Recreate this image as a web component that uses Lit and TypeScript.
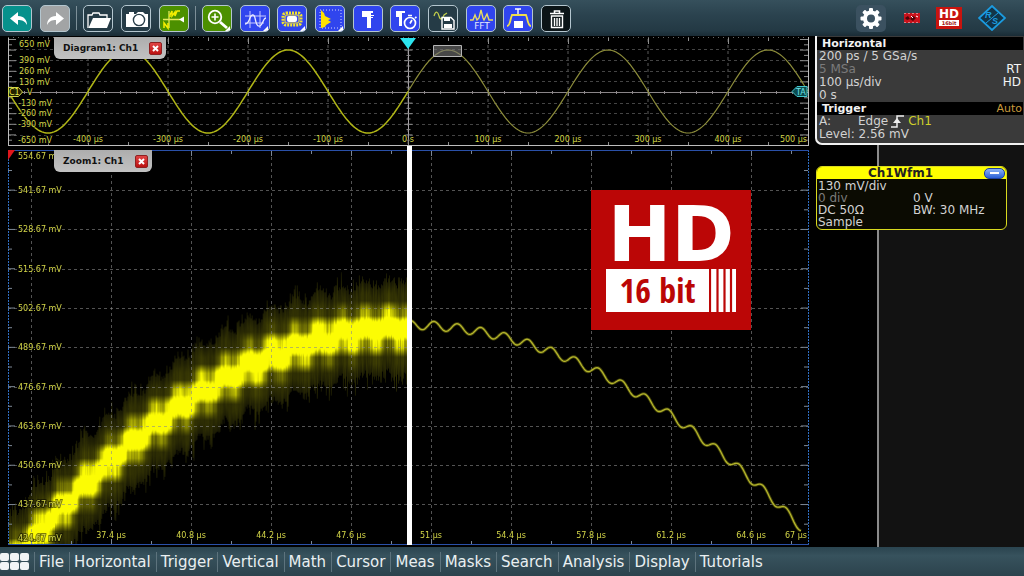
import { LitElement, html, svg, css } from "lit";
import { customElement, property } from "lit/decorators.js";

const range = (n: number, from = 0) => Array.from({ length: n }, (_, i) => i + from);

/* ---------- toolbar glyphs, drawn in a 30 x 27 box ---------- */
const corner = svg`<path d="M27 20v5h-5z" fill="#fff"/>`;
const glyphs: Record<string, unknown> = {
  undo: svg`<path d="M7 12.500 15 6v4c6 0 9 4 9 9-2-4-5-5-9-5v5z" fill="#fff"/>`,
  redo: svg`<path d="M23 12.500 15 6v4c-6 0-9 4-9 9 2-4 5-5 9-5v5z" fill="#fff"/>`,
  open: svg`<path d="M4 22V9h4l1-2h6l1 2h7v3" fill="none" stroke="#fff" stroke-width="1.300"/><path d="M9 12h18l-4 10H4.500z" fill="#fff"/>`,
  camera: svg`<path d="M4 8h3V6h5v2h2l2-2h5l2 2h3v13H4z" fill="#fff"/><circle cx="17" cy="14" r="5.600" fill="#fff" stroke="#2a3f4a" stroke-width="1.400"/>`,
  autoset: svg`<path d="M9 5v17M3 13.500h17" stroke="#e4ea5a" stroke-width="1.300"/><path d="M10 11V9l2-4v5l3-4v4l2-5h3" fill="none" stroke="#f4ee00" stroke-width="1.500"/><path d="M4 22v-5l4 5v-5" fill="none" stroke="#f4ee00" stroke-width="1.500"/><path d="m19 13.500 5-3v6z" fill="#fff"/>`,
  zoom: svg`<circle cx="12" cy="11" r="6.300" fill="none" stroke="#fff" stroke-width="1.800"/><path d="M8.500 11h7M12 7.500v7" stroke="#fff" stroke-width="1.600"/><path d="m17 16 7 6" stroke="#fff" stroke-width="2.800"/>${corner}`,
  cursor: svg`<path d="M9 5v17M19 5v17M4 10h21M4 17h19" stroke="#c9ccff" stroke-width="1"/><path d="M4 18c3 0 4-3 5-6s4-5 5 0 2 9 5 8 3-8 6-8" fill="none" stroke="#e9e9ff" stroke-width="1.300"/>${corner}`,
  mask: svg`<rect x="5" y="7" width="18" height="12" rx="3" fill="none" stroke="#f4e430" stroke-width="3" stroke-dasharray="2 1"/><rect x="7" y="9" width="14" height="8" rx="2" fill="#3c4bf0" stroke="#f4e430"/><rect x="9" y="10" width="10" height="6" rx="2" fill="#fff"/>${corner}`,
  histogram: svg`<path d="M4 4h21v18H4z" fill="none" stroke="#d5d8ff" stroke-dasharray="1 2"/><path d="M5 4 8 7l1 3 6 3-3 1 3 2-5 3-1 2-4 1z" fill="#ffe100"/>${corner}`,
  measure: svg`<path d="M8 5h11v2h-2v15h-4V11H8z" fill="#fff"/><path d="M17 9.500h3M17 11.500h2" stroke="#fff"/>`,
  quick: svg`<path d="M5 5h9v2h-3v13H8V11H5z" fill="#fff"/><circle cx="19" cy="17" r="5.500" fill="#3348ee" stroke="#fff" stroke-width="1.700"/><path d="M19 17.500 21 14M17 9.500h4M24 12l1.500-1" stroke="#fff" stroke-width="1.700"/>`,
  save: svg`<path d="M5 10c2-6 4-4 5 0s3 4 5-1l3-2" fill="none" stroke="#c3cf4a" stroke-width="1.200"/><path d="M13 11.500h9l3 3V23H13z" fill="none" stroke="#fff" stroke-width="1.400"/><path d="M15 12h6v3h-6zM15 18h8v4h-8z" fill="#fff"/>`,
  fft: svg`<path d="M3 14h3l2-5 2 5 2-2 2-8 2 8 1 2 3-6 2 6h4" fill="none" stroke="#e7dc63" stroke-width="1.400"/><text x="15" y="23" text-anchor="middle" class="tiny">FFT</text>`,
  gate: svg`<path d="M3 20c2 0 3-3 4-8l1-3h14l1 3c1 5 2 8 4 8" fill="none" stroke="#f0df4a" stroke-width="1.800"/><path d="M11 3h6M14 3v5" stroke="#fff" stroke-width="1.400"/><path d="M10 15h9v7h-9z" fill="#fff"/>`,
  trash: svg`<path d="M8 7.500h14M12.500 7V5h5v2" fill="none" stroke="#fff" stroke-width="1.600"/><path d="M9.500 10h11v11.500h-11zM12.500 12v8M15 12v8M17.500 12v8" fill="none" stroke="#fff" stroke-width="1.400"/>`,
};

type Tool = [id: string, label: string, tone: string];
const groups: Tool[][] = [
  [["undo", "Undo", "teal"], ["redo", "Redo", "gray"]],
  [["open", "Open", "dark"], ["camera", "Screenshot", "dark"], ["autoset", "Autoset", "green"]],
  [
    ["zoom", "Zoom", "green"], ["cursor", "Cursor", "blue"], ["mask", "Mask test", "blue"],
    ["histogram", "Histogram", "blue"], ["measure", "Measurement", "blue"], ["quick", "Quick measurement", "blue"],
    ["save", "Save waveform", "dark"], ["fft", "FFT", "blue"], ["gate", "Gate", "blue"], ["trash", "Delete", "black"],
  ],
];
const menus = ["File", "Horizontal", "Trigger", "Vertical", "Math", "Cursor", "Meas", "Masks", "Search", "Analysis", "Display", "Tutorials"];

@customElement("scope-toolbar")
export class ScopeToolbar extends LitElement {
  static styles = css`
    :host {
      display: flex; align-items: center; box-sizing: border-box; height: 36px; padding: 0 18px 0 2px;
      background: linear-gradient(#36505c 0, #2b434f 40%, #233944 85%, #1a2c36 100%);
    }
    .group { display: flex; gap: 8px; }
    .wide { width: 369px; gap: 0; justify-content: space-between; }
    .rule { width: 1px; height: 24px; margin: 0 6px; background: #7d8f98; }
    .tool {
      width: 30px; height: 27px; padding: 0; box-sizing: border-box; overflow: hidden;
      border: 1px solid #b4c6cf; border-radius: 5px; display: grid; place-items: center;
    }
    .tool svg { width: 30px; height: 27px; display: block; }
    .teal { background: #07918c; }
    .gray { background: #a2a4a5; }
    .dark { background: #253b46; }
    .green { background: #4c9000; }
    .blue { background: #3045ee; }
    .black { background: #0b1417; }
    .tiny { font: 9px "DejaVu Sans", sans-serif; fill: #e8eaff; }
    .space { flex: 1; }
    .status { display: flex; align-items: center; }
    .gear { border: 0; background: #3b5160; }
    .flag { width: 16px; height: 10px; margin: 0 16px 0 18px; }
    .badge {
      width: 26px; height: 22px; box-sizing: border-box; background: #c8140f; color: #fff;
      display: grid; grid-template-rows: 12px 6px; justify-content: center; padding-top: 1px;
      font: bold 12px/12px "DejaVu Sans", sans-serif; text-align: center;
    }
    .badge small { display: block; background: #fff; color: #a31310; font: bold 5px/6px "DejaVu Sans", sans-serif; }
    .brand { width: 28px; height: 26px; margin-left: 16px; }
    .brandText { font: italic bold 9px "Liberation Sans", sans-serif; fill: #1b9be0; }
  `;
  render() {
    return html`
      ${groups.map((g, i) => html`
        ${i ? html`<span class="rule"></span>` : ""}
        <div class="group ${i === 2 ? "wide" : ""}">
          ${g.map(([id, label, tone]) => html`<button class="tool ${tone}" aria-label=${label}>
            <svg viewBox="0 0 30 27" aria-hidden="true">${glyphs[id]}</svg></button>`)}
        </div>`)}
      <span class="space"></span>
      <div class="status">
        <button class="tool gear" aria-label="Settings">
          <svg viewBox="0 0 30 27" aria-hidden="true">
            ${range(8).map((i) => svg`<rect x="13" y="3" width="4" height="6" rx="1" fill="#fff" transform="rotate(${i * 45} 15 13.500)"/>`)}
            <circle cx="15" cy="13.500" r="6" fill="none" stroke="#fff" stroke-width="4"/>
          </svg>
        </button>
        <svg class="flag" viewBox="0 0 16 10" aria-hidden="true">
          <path d="M0 0h16v10H0z" fill="#c8121c"/><path d="m1 5 3-2 2 3 3-3 3 2-3 3-3-2-3 1z" fill="#4d0508"/>
          <path d="M0 .5h16M0 9.500h16" stroke="#e6c5c5" stroke-opacity=".6" stroke-dasharray="2 2"/><path d="m7 3 2 2M12 3l2 1" stroke="#fff" fill="none"/>
        </svg>
        <div class="badge">HD<small>16bit</small></div>
        <svg class="brand" viewBox="0 0 28 26" aria-hidden="true">
          <path d="M14 1 27 13 14 25 1 13z" fill="#123448" stroke="#1b9be0" stroke-width="1.800"/>
          <text x="7" y="13" class="brandText">R</text><text x="14" y="19" class="brandText">S</text>
          <path d="M8 18 20 8" stroke="#1b9be0"/>
        </svg>
      </div>`;
  }
}

@customElement("scope-tab")
export class ScopeTab extends LitElement {
  @property() label = "";
  static styles = css`
    :host {
      display: flex; align-items: center; gap: 11px; height: 22px; padding: 0 4px 0 9px;
      background: linear-gradient(#adadad, #c2c2c2); border-radius: 0 0 6px 6px;
      font: bold 9px/22px "DejaVu Sans", sans-serif; color: #111; white-space: nowrap;
    }
    .close { width: 13px; height: 13px; padding: 0; border: 1px solid #8e2020; border-radius: 2px; background: linear-gradient(#e04444, #bb1111); }
    .close svg { display: block; width: 11px; height: 11px; }
  `;
  render() {
    return html`<span>${this.label}</span>
      <button class="close" aria-label="Close ${this.label}">
        <svg viewBox="0 0 11 11" aria-hidden="true"><path d="m3 3 5 5M8 3 3 8" stroke="#fff" stroke-width="2"/></svg>
      </button>`;
  }
}

const plotText = css`
  .plot { display: block; width: 100%; height: 100%; }
  .axis { font: 8px "DejaVu Sans", sans-serif; fill: #d3d548; stroke: #000; stroke-opacity: 0.500; stroke-width: 2px; paint-order: stroke; }
  .tab { position: absolute; top: 0; left: 46px; }
`;

@customElement("scope-overview")
export class ScopeOverview extends LitElement {
  static styles = [plotText, css`
    :host { display: block; position: relative; min-height: 0; background: #000; }
    .mark { font: 8px "DejaVu Sans", sans-serif; }
  `];
  render() {
    const sine = (a: number, b: number) =>
      "M" + range((b - a) / 2 + 1).map((i) => {
        const x = a + i * 2;
        return `${x} ${(54.5 - 41.5 * Math.sin(((x - 400) / 160) * 2 * Math.PI)).toFixed(1)}`;
      }).join("L");
    const rows: [string, number][] = [["650 mV", 7], ["390 mV", 23], ["260 mV", 34], ["130 mV", 45], ["-130 mV", 66], ["-260 mV", 76], ["-390 mV", 87], ["-650 mV", 103]];
    return html`
      <svg class="plot" viewBox="0 0 801 109" preserveAspectRatio="none" role="img" aria-label="Overview waveform">
        ${range(9, 1).map((i) => svg`<path d="M${i * 80} 2V108" stroke="#5a5a5a" stroke-dasharray="3 3"/>`)}
        ${range(9, -4).map((i) => svg`<path d="M0 ${Math.round(55 + i * 10.65) + 0.5}H800" stroke="#444" stroke-dasharray="3 3"/>`)}
        <path d="M0 55.500H800" stroke="#8a8588"/><path d="M400.500 2V108" stroke="#a5a0a5"/>
        ${range(51).map((i) => svg`<path d="M${i * 16 + 0.5} ${i % 5 ? 54 : 52}v${i % 5 ? 3 : 7}" stroke="#8e898c"/>`)}
        ${range(21).map((i) => svg`<path d="M${i * 40 + 0.5} 1v${i % 2 ? 3 : 6}M${i * 40 + 0.5} 108v-${i % 2 ? 3 : 6}" stroke="#8e8e8e"/>`)}
        ${range(20, -10).map((i) => {
          const y = 55.5 + i * 5.3;
          const w = i % 2 ? 4 : 8;
          return svg`<path d="M0 ${y}h${w}M800 ${y}h-${w}M${400.5 - w / 2} ${y}h${w}" stroke="#8e8e8e"/>`;
        })}
        <path d="M.5 0V109M0 108.500H801M800.500 0V109" stroke="#bdbdbd"/>
        <path d="M0 .5H800" stroke="#6a6a6a" stroke-dasharray="1 4"/>
        <path d=${sine(0, 400)} fill="none" stroke="#b0b516" stroke-width="1.500"/>
        <path d=${sine(400, 800)} fill="none" stroke="#8c8c3a" stroke-width="1.200"/>
        <path d="M425.500 8.500h28v11h-28z" fill="#77777799" stroke="#b5b5b5"/>
        <path d="M392 1h16l-8 11z" fill="#2be4ee"/>
        ${rows.map(([t, y]) => svg`<text class="axis" x=${t[0] === "-" ? 10 : 11} y=${y + 3}>${t}</text>`)}
        <text class="axis" x="19" y="58">V</text>
        ${range(9, 1).map((i) => svg`<text class="axis" x=${i * 80} y="105" text-anchor="middle">${i === 5 ? "0 s" : `${(i - 5) * 100} µs`}</text>`)}
        <text class="axis" x="799" y="105" text-anchor="end">500 µs</text>
        <path d="M.5 50.500h10l4 4.500-4 4.500h-10z" fill="#222200" stroke="#d3d548"/>
        <text class="mark" x="1" y="58" fill="#e6e84e">C1</text>
        <path d="M799 49.500h-10l-5 5 5 5h10z" fill="#0b4c50" stroke="#44c6cc"/>
        <text class="mark" x="788" y="58" fill="#6fe3e6">TA</text>
      </svg>
      <scope-tab class="tab" label="Diagram1: Ch1"></scope-tab>`;
  }
}

/* Persistence display of the low-resolution acquisition: the samples fall on
   discrete converter levels, so brightness is evaluated per level and column. */
const LEVEL = 15.8;
const LEVEL_TOP = 11.8;
const ripple = (x: number) => -4.5 * Math.cos(((x - 426) / 23.5) * 2 * Math.PI);

@customElement("scope-zoom")
export class ScopeZoom extends LitElement {
  static styles = [plotText, css`
    :host { display: grid; position: relative; min-height: 0; background: #000; grid-template: minmax(0, 1fr) / minmax(0, 1fr); }
    .layer { grid-area: 1 / 1; width: 100%; height: 100%; display: block; min-width: 0; min-height: 0; }
    .half { width: 50%; }
    .divider { position: absolute; top: -4px; bottom: 0; left: calc(50% - 2px); width: 5px; background: #fff; }
    .logo {
      position: absolute; top: 40px; right: 58px; width: 160px; height: 140px; box-sizing: border-box;
      padding: 12px 15px 18px; background: #bb0606; color: #fff; display: grid; grid-template-rows: 67px 43px;
    }
    .hd { font: bold 76px/66px "DejaVu Sans", sans-serif; text-align: center; white-space: nowrap; justify-self: center; }
    .bits { display: flex; background: #fff; color: #bb0606; }
    .bitText { flex: 1; text-align: center; font: bold 34px/43px "Liberation Sans Narrow", "Open Sans Condensed", "DejaVu Sans Condensed", sans-serif; }
    .bars { width: 27px; height: 43px; display: block; }
  `];
  firstUpdated() {
    const canvas = this.renderRoot.querySelector("canvas") as HTMLCanvasElement;
    const ctx = canvas.getContext("2d")!;
    const W = canvas.width, H = canvas.height;
    const img = ctx.createImageData(W, H);
    let seed = 7;
    const rnd = () => ((seed = (seed * 16807) % 2147483647) / 2147483647);
    const BLUR = 4;
    for (let x = 1; x < W; x++) {
      const base = 177 + 0.00149 * (x - 400) ** 2;
      const c = base + ripple(x) + (rnd() - 0.5) * 3;
      const up = 42 + rnd() * 6 + rnd() ** 4 * 12;
      const down = 42 + rnd() * 6 + rnd() ** 4 * 18;
      const gain = 0.85 + rnd() * 0.28;
      for (let y = 1; y < H; y++) {
        const d = y - c;
        if (d < -up || d > down) continue;
        let v = 0;
        for (let s = -BLUR; s <= BLUR; s++) {
          const lv = Math.floor((y + s - LEVEL_TOP) / LEVEL) + 0.5;
          const e = 0.85 * (lv * LEVEL + LEVEL_TOP - c) + 0.15 * d;
          v += (1.35 * Math.exp((-e * e) / 225)) / (2 * BLUR + 1);
        }
        const edge = Math.min(1, (d < 0 ? up + d : down - d) / 12);
        v = Math.min(1, v * gain + (0.1 + 0.07 * edge) * gain);
        const o = (y * W + x) * 4;
        img.data[o] = img.data[o + 1] = Math.round(v * 252);
        img.data[o + 2] = 4;
        img.data[o + 3] = 255;
      }
    }
    ctx.putImageData(img, 0, 0);
  }
  render() {
    const trace = "M" + range(391, 403).map((x) =>
      `${x} ${(175 + 0.00131 * (x - 400) ** 2 + ripple(x)).toFixed(1)}`).join("L");
    const times = ["37.4", "40.8", "44.2", "47.6", "51", "54.4", "57.8", "61.2", "64.6"];
    return html`
      <canvas class="layer half" width="400" height="394"></canvas>
      <svg class="layer" viewBox="0 0 801 395" preserveAspectRatio="none" role="img" aria-label="Zoomed waveform">
        ${range(10).map((i) => svg`<path d="M${23.5 + i * 80} 1V394" stroke="#8a8a8a" stroke-opacity=".6" stroke-dasharray="3 3"/>`)}
        ${range(9).map((i) => svg`<path d="M0 ${Math.round(40 + i * 39.3) + 0.5}H800" stroke="#8a8a8a" stroke-opacity=".6" stroke-dasharray="3 3"/>`)}
        <path d="M.5 0V395M800.500 0V395" stroke="#2f6fc4" stroke-dasharray="2 1"/>
        <path d="M0 .5H801M0 394.500H801" stroke="#2a50a8"/>
        ${range(20).map((i) => svg`<path d="M${23.5 + i * 40} 1v${i % 2 ? 3 : 5}M${23.5 + i * 40} 394v-${i % 2 ? 3 : 5}" stroke="#7c8794"/>`)}
        ${range(19).map((i) => {
          const y = 20.5 + i * 19.65, w = i % 2 ? 7 : 4;
          return svg`<path d="M0 ${y}h${w}M800 ${y}h-${w}" stroke="#7c8794"/>`;
        })}
        <path d=${trace} fill="none" stroke="#6f7010" stroke-opacity=".6" stroke-width="3"/>
        <path d=${trace} fill="none" stroke="#b4b42c" stroke-width="1.300"/>
        <path d="M0 0h7L0 10z" fill="#e0161c"/>
        ${range(11).map((i) => svg`<text class="axis" x="10" y=${i === 0 ? 9 : i === 10 ? 391 : Math.round(43 + (i - 1) * 39.3)}>${(554.67 - i * 13).toFixed(2)} mV</text>`)}
        ${times.map((t, i) => svg`<text class="axis" x=${103 + i * 80} y="388" text-anchor="middle">${t} µs</text>`)}
        <text class="axis" x="799" y="388" text-anchor="end">67 µs</text>
      </svg>
      <span class="divider"></span>
      <scope-tab class="tab" label="Zoom1: Ch1"></scope-tab>
      <div class="logo">
        <span class="hd">HD</span>
        <div class="bits">
          <span class="bitText">16 bit</span>
          <svg class="bars" viewBox="0 0 27 43" aria-hidden="true">
            <path d="M1 0v43M8.500 0v43M15.500 0v43M22 0v43" stroke="#bb0606" stroke-width="2.200"/>
          </svg>
        </div>
      </div>`;
  }
}

@customElement("scope-sidebar")
export class ScopeSidebar extends LitElement {
  static styles = css`
    :host {
      display: block; font: 12px/13px "DejaVu Sans", sans-serif; color: #d2d2d2;
      background: linear-gradient(to right, #000 62px, #8b8b8b 62px, #8b8b8b 64px, #121212 64px);
    }
    .panel { background: #3a3a3a; border: solid #f2f2f2; border-width: 0 0 2px 2px; border-radius: 0 0 0 7px; overflow: hidden; padding: 1px 1px 0 0; }
    .head { display: flex; justify-content: space-between; background: #000; color: #f2f2f2; margin: 0; padding: 0 0 0 5px; font: bold 11px/13px "DejaVu Sans", sans-serif; }
    .auto { font-weight: normal; color: #c99a3c; font-size: 11px; padding-right: 1px; }
    .body { padding: 0 2px 2px; }
    .list { padding-bottom: 0; }
    .row { display: flex; justify-content: space-between; }
    .dim { color: #7b7b7b; }
    .strong { color: #f4f4f4; }
    .source { display: grid; grid-template-columns: 39px auto 20px 1fr; }
    .edge { width: 18px; height: 13px; display: block; }
    .yellow { color: #cfd02a; }
    .card { margin: 21px 17px 0 1px; border: 1px solid #d9da1e; border-radius: 6px; background: #0b0b02; overflow: hidden; line-height: 12px; }
    .title { display: grid; grid-template-columns: 1fr auto; align-items: center; height: 12px; margin: 0; background: #ffff00; color: #222; font: bold 12px/12px "DejaVu Sans", sans-serif; text-align: center; padding: 0 1px 0 0; }
    .min { width: 21px; height: 11px; padding: 0; border: 1px solid #1c3f9c; border-radius: 5px; background: linear-gradient(#8db4f5, #2a5fd6); display: grid; place-items: center; }
    .bar { width: 9px; height: 2px; background: #fff; }
    .grid { display: grid; grid-template-columns: 95px 1fr; padding: 1px 0 1px 1px; white-space: nowrap; }
  `;
  render() {
    return html`
      <section class="panel">
        <h2 class="head">Horizontal</h2>
        <div class="body list">
          <div class="row">200 ps / 5 GSa/s</div>
          <div class="row"><span class="dim">5 MSa</span><span class="strong">RT</span></div>
          <div class="row"><span>100 µs/div</span><span class="strong">HD</span></div>
          <div class="row">0 s</div>
        </div>
        <h2 class="head"><span>Trigger</span><span class="auto">Auto</span></h2>
        <div class="body">
          <div class="source"><span>A:</span><span>Edge</span>
            <svg class="edge" viewBox="0 0 18 13" aria-hidden="true"><path d="M3 12h6V1h7" fill="none" stroke="#eee" stroke-width="1.500"/><path d="M5 8 9 3l4 5z" fill="#eee"/></svg>
            <span class="yellow">Ch1</span></div>
          <div>Level: 2.56 mV</div>
        </div>
      </section>
      <section class="card">
        <h2 class="title"><span>Ch1Wfm1</span><button class="min" aria-label="Minimize"><span class="bar"></span></button></h2>
        <div class="grid">
          <span>130 mV/div</span><span></span>
          <span class="dim">0 div</span><span>0 V</span>
          <span>DC 50Ω</span><span>BW: 30 MHz</span>
          <span>Sample</span>
        </div>
      </section>`;
  }
}

@customElement("app-root")
export class AppRoot extends LitElement {
  static styles = css`
    :host { display: grid; grid-template-rows: auto minmax(0, 1fr) auto; height: 100vh; background: #000; overflow: hidden; }
    .main { display: grid; grid-template-columns: minmax(0, 1fr) 209px; gap: 6px; padding-left: 8px; min-height: 0; }
    .plots { display: grid; grid-template-rows: minmax(0, 109fr) minmax(0, 395fr); gap: 4px; padding: 1px 0 2px; min-height: 0; }
    .menu {
      display: flex; align-items: center; height: 29px; font: 15px/20px "DejaVu Sans", sans-serif;
      background: linear-gradient(#2a444f, #37525d 30%, #2c434d 100%);
    }
    .apps { width: 31px; height: 18px; padding: 0; border: 0; background: none; display: grid; grid-template-columns: repeat(3, 9px); gap: 1px; margin-right: 3px; }
    .dot { background: #f1f5f6; border-radius: 2px; height: 8px; }
    .item { color: #e9eff1; text-decoration: none; border-left: 1px solid #5d737d; padding: 0 5px 0 4px; white-space: nowrap; }
  `;
  render() {
    return html`
      <scope-toolbar></scope-toolbar>
      <main class="main">
        <div class="plots"><scope-overview></scope-overview><scope-zoom></scope-zoom></div>
        <scope-sidebar></scope-sidebar>
      </main>
      <nav class="menu">
        <button class="apps" aria-label="Applications">${range(6).map(() => html`<span class="dot"></span>`)}</button>
        ${menus.map((m) => html`<a class="item" href="#">${m}</a>`)}
      </nav>`;
  }
}
